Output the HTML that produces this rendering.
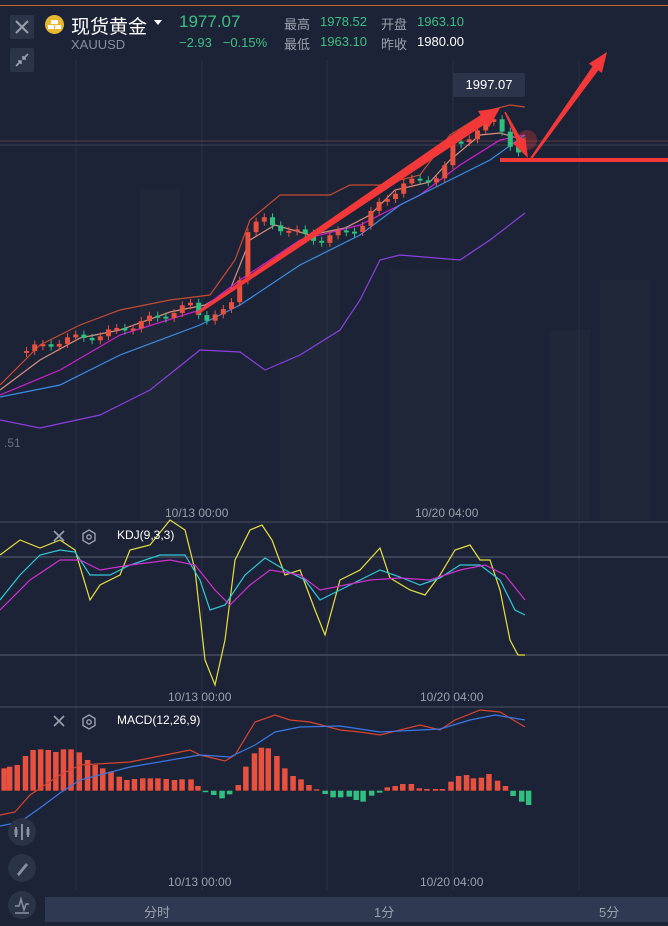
<!DOCTYPE html>
<html><head><meta charset="utf-8">
<style>
html,body{margin:0;padding:0;background:#1c2336;width:668px;height:926px;overflow:hidden;font-family:"Liberation Sans","Noto Sans CJK SC",sans-serif;}
.abs{position:absolute}
svg{position:absolute;left:0;top:0}
.t{color:#9aa0ad;font-size:13px}
.g{color:#3dbf84}
</style></head><body>
<div class="abs" style="left:0;top:0;width:668px;height:926px">
<svg id="s" width="668" height="926" viewBox="0 0 668 926"></svg>
</div>
<div class="abs" style="left:0;top:5px;width:668px;height:1px;background:#c8642c"></div>
<div class="abs" style="left:10px;top:15px;width:24px;height:24px;background:#2c3447;border-radius:2px"></div>
<svg style="left:10px;top:15px" width="24" height="24"><path d="M6 6L18 18M18 6L6 18" stroke="#9aa0ad" stroke-width="2"/></svg>
<div class="abs" style="left:10px;top:48px;width:24px;height:24px;background:#2c3447;border-radius:2px"></div>
<svg style="left:10px;top:48px" width="24" height="24"><path d="M6 18L11 13M8 13h3v3M18 6L13 11M16 11h-3v-3" stroke="#9aa0ad" stroke-width="1.6" fill="none"/></svg>
<div class="abs" style="left:45px;top:15px;width:19px;height:19px;border-radius:50%;background:#e8b830"></div>
<div class="abs" style="left:51px;top:20px;width:7px;height:4px;background:#fff"></div>
<div class="abs" style="left:48px;top:25px;width:6px;height:4px;background:#fff"></div>
<div class="abs" style="left:55px;top:25px;width:6px;height:4px;background:#fff"></div>
<div class="abs" style="left:71px;top:12px;color:#fff;font-size:19px">现货黄金</div>
<div class="abs" style="left:154px;top:20px;width:0;height:0;border-left:4px solid transparent;border-right:4px solid transparent;border-top:5px solid #fff"></div>
<div class="abs" style="left:71px;top:37px;color:#8a90a0;font-size:13px">XAUUSD</div>
<div class="abs g" style="left:179px;top:12px;font-size:17px">1977.07</div>
<div class="abs g" style="left:179px;top:35px;font-size:13px">−2.93&nbsp;&nbsp;&nbsp;−0.15%</div>
<div class="abs t" style="left:284px;top:14px">最高</div>
<div class="abs g" style="left:320px;top:14px;font-size:13px">1978.52</div>
<div class="abs t" style="left:381px;top:14px">开盘</div>
<div class="abs g" style="left:417px;top:14px;font-size:13px">1963.10</div>
<div class="abs t" style="left:284px;top:34px">最低</div>
<div class="abs g" style="left:320px;top:34px;font-size:13px">1963.10</div>
<div class="abs t" style="left:381px;top:34px">昨收</div>
<div class="abs" style="left:417px;top:34px;font-size:13px;color:#fff">1980.00</div>
<div class="abs" style="left:453px;top:73px;width:72px;height:24px;background:#2b3449;border-radius:2px;color:#fff;font-size:13px;text-align:center;line-height:24px">1997.07</div>
<div class="abs" style="left:4px;top:436px;color:#6b7182;font-size:12px">.51</div>
<div class="abs t" style="left:165px;top:506px;font-size:12px">10/13 00:00</div>
<div class="abs t" style="left:415px;top:506px;font-size:12px">10/20 04:00</div>
<div class="abs" style="left:117px;top:528px;color:#fff;font-size:12px">KDJ(9,3,3)</div>
<div class="abs t" style="left:168px;top:690px;font-size:12px">10/13 00:00</div>
<div class="abs t" style="left:420px;top:690px;font-size:12px">10/20 04:00</div>
<div class="abs" style="left:117px;top:713px;color:#fff;font-size:12px">MACD(12,26,9)</div>
<div class="abs t" style="left:168px;top:875px;font-size:12px">10/13 00:00</div>
<div class="abs t" style="left:420px;top:875px;font-size:12px">10/20 04:00</div>
<div class="abs" style="left:45px;top:897px;width:623px;height:25px;background:#2f3a52"></div>
<div class="abs t" style="left:144px;top:902px">分时</div>
<div class="abs t" style="left:374px;top:902px">1分</div>
<div class="abs t" style="left:599px;top:902px">5分</div>
<script>
var s=document.getElementById('s'),h='';
function L(x1,y1,x2,y2,c,w){h+='<line x1="'+x1+'" y1="'+y1+'" x2="'+x2+'" y2="'+y2+'" stroke="'+c+'" stroke-width="'+(w||1)+'"/>';}
function P(pts,c,w){h+='<polyline fill="none" stroke="'+c+'" stroke-width="'+(w||1.2)+'" points="'+pts+'"/>';}
function R(x,y,w,hh,c){h+='<rect x="'+x+'" y="'+y+'" width="'+w+'" height="'+hh+'" fill="'+c+'"/>';}
[[140,190,40,330],[280,200,60,320],[390,270,60,250],[550,330,40,190],[600,280,50,240]].forEach(function(b){R(b[0],b[1],b[2],b[3],'#1f2739');});
[76,202,327,453,579].forEach(function(x){L(x,60,x,520,'#2a3246');L(x,522,x,707,'#2a3246');L(x,707,x,890,'#2a3246');});
L(0,141,668,141,'#5a3a44');L(0,145,668,145,'#3a4256');
L(0,522,668,522,'#4a5266');L(0,557,668,557,'#5a6072');L(0,655,668,655,'#5a6072');L(0,707,668,707,'#4a5266');
P('0,385 40,345 80,325 120,310 170,300 210,295 235,260 250,220 280,195 330,195 350,185 380,185 420,175 450,135 490,110 510,105 525,107','#c84a32');
P('0,390 40,360 80,338 120,330 170,312 205,305 230,290 250,240 275,225 310,235 345,228 370,215 395,190 430,182 450,160 480,135 500,133 525,140','#d79080');
P('0,395 60,370 120,335 200,310 240,280 300,240 360,225 420,195 460,165 500,140 525,135','#d020d0');
P('0,397 60,385 120,355 200,325 240,305 300,265 360,235 400,205 450,180 490,160 525,135','#3a8ee8');
P('0,420 40,428 100,415 150,390 200,350 240,352 265,370 300,355 340,330 360,300 380,260 400,255 460,260 490,240 525,213','#8a40e0');
var pp=[[20,352],[60,340],[100,335],[140,322],[190,305],[200,318],[225,312],[235,290],[245,230],[260,220],[290,232],[320,240],[360,225],[380,200],[400,185],[440,175],[450,145],[480,128],[495,118],[505,140],[515,155]];
function py(x){for(var i=0;i<pp.length-1;i++){if(x<=pp[i+1][0]){var a=pp[i],b=pp[i+1];return a[1]+(b[1]-a[1])*(x-a[0])/(b[0]-a[0]);}}return 155;}
var prev=py(20);
for(var x=24;x<=516;x+=8.2){var c=py(x)+Math.sin(x*1.7)*4;var col=c<prev?'#e8503f':'#2fbf7e';var t=Math.min(c,prev),b=Math.max(c,prev);if(b-t<2)b=t+2;L(x+2.5,t-4,x+2.5,b+4,col);R(x,t,5,b-t,col);prev=c;}
function A(x1,y1,x2,y2,w,hw){var dx=x2-x1,dy=y2-y1,l=Math.hypot(dx,dy),ux=dx/l,uy=dy/l,nx=-uy,ny=ux,bx=x2-ux*20,by=y2-uy*20;
h+='<polygon fill="#f23838" points="'+(x1+nx*w*0.3)+','+(y1+ny*w*0.3)+' '+(bx+nx*w)+','+(by+ny*w)+' '+(bx+nx*hw)+','+(by+ny*hw)+' '+x2+','+y2+' '+(bx-nx*hw)+','+(by-ny*hw)+' '+(bx-nx*w)+','+(by-ny*w)+' '+(x1-nx*w*0.3)+','+(y1-ny*w*0.3)+'"/>';}
A(196,314,500,108,5,10);A(505,112,528,158,2.5,7);A(530,160,607,52,3.5,8);
R(500,158,168,4,'#f23838');
h+='<circle cx="527" cy="140" r="10" fill="#f23838" opacity="0.3"/>';
P('0,555 20,540 40,548 60,540 75,550 90,600 100,585 120,575 130,550 150,545 170,520 185,530 195,570 205,660 215,685 225,640 235,560 250,530 262,525 272,540 285,575 300,570 315,610 325,635 340,580 360,570 380,548 390,578 410,590 425,595 440,575 455,550 470,545 480,560 490,560 500,590 510,640 518,655 525,655','#e8e040');
P('0,600 20,575 40,555 60,550 75,552 90,575 110,575 130,565 160,555 185,555 200,580 210,610 225,605 245,575 265,558 285,570 305,580 320,600 340,590 360,580 380,570 400,577 420,585 440,578 460,565 480,565 500,580 515,610 525,615','#30c8d8');
P('0,610 30,580 60,560 80,560 100,570 130,565 170,560 195,565 215,590 230,605 250,585 270,570 300,575 320,590 345,585 370,580 400,578 430,580 460,570 485,565 505,575 525,600','#d030d0');
var bars=[[4,205],[20,200],[42,195],[66,168],[88,150],[110,148],[132,150],[154,156],[176,148],[198,148],[222,157],[246,180],[268,195],[290,205],[314,215],[338,230],[360,240],[382,237],[406,235],[428,235],[450,235],[474,237],[498,240],[520,238],[546,238],[566,258],[588,276],[612,285],[636,295],[658,283],[683,255],[705,200],[730,160],[750,143],[770,145],[795,168],[818,205],[842,228],[865,238],[888,255],[910,268],[935,282],[958,292],[980,292],[1005,290],[1025,300],[1045,305],[1070,287],[1093,278],[1115,262],[1138,258],[1160,252],[1185,252],[1208,265],[1230,267],[1255,267],[1275,267],[1300,245],[1322,228],[1345,225],[1365,235],[1388,233],[1410,222],[1435,242],[1458,258],[1480,288],[1505,305],[1525,315]];
bars.forEach(function(b){var x=b[0]/2.9,t=700+b[1]/3,z=790.7;if(t<z)R(x,t,5.5,z-t,'#e8503f');else R(x,z,5.5,Math.max(t-z,1.5),'#2fbf7e');});
P('0,815 15,812 30,795 60,775 80,765 130,762 190,750 200,755 225,761 235,755 255,722 275,715 290,720 310,722 340,730 360,732 380,735 420,725 440,730 455,720 480,710 500,712 525,727','#d8452e');
P('0,826 20,822 40,808 60,793 80,780 130,767 200,755 230,757 255,745 275,732 300,727 340,726 380,732 420,730 440,729 470,720 495,715 525,720','#3a78e8');
s.innerHTML=h;
</script>
<svg style="left:50px;top:528px" width="50" height="18"><path d="M4 3L14 13M14 3L4 13" stroke="#9aa0ad" stroke-width="1.6"/><polygon points="39,2 45,5.5 45,12.5 39,16 33,12.5 33,5.5" fill="none" stroke="#9aa0ad" stroke-width="1.4"/><circle cx="39" cy="9" r="2.2" fill="none" stroke="#9aa0ad" stroke-width="1.4"/></svg>
<svg style="left:50px;top:713px" width="50" height="18"><path d="M4 3L14 13M14 3L4 13" stroke="#9aa0ad" stroke-width="1.6"/><polygon points="39,2 45,5.5 45,12.5 39,16 33,12.5 33,5.5" fill="none" stroke="#9aa0ad" stroke-width="1.4"/><circle cx="39" cy="9" r="2.2" fill="none" stroke="#9aa0ad" stroke-width="1.4"/></svg>
<svg style="left:8px;top:818px" width="30" height="108">
<circle cx="14" cy="14" r="14" fill="#2b3447"/><circle cx="14" cy="50" r="14" fill="#2b3447"/><circle cx="14" cy="87" r="14" fill="#2b3447"/>
<path d="M8 9v10M14 6v16M20 9v10" stroke="#8a90a0" stroke-width="2"/><rect x="6.5" y="11" width="3" height="6" fill="#8a90a0"/><rect x="18.5" y="11" width="3" height="6" fill="#8a90a0"/>
<path d="M9 56L18 45L20 47L11 58Z" fill="#8a90a0"/>
<path d="M7 88L11 88L13 81L16 92L18 86L21 86M7 95H21" stroke="#8a90a0" stroke-width="1.5" fill="none"/>
</svg>
</body></html>
